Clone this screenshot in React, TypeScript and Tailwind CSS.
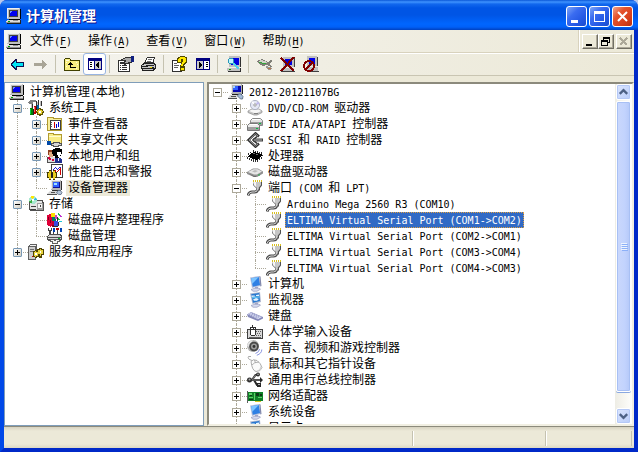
import { useState, type ReactNode } from "react";

type IconName = keyof typeof ICONS;

type Node = {
  icon: IconName;
  text: string;
  open?: boolean;
  closed?: boolean;
  children?: Node[];
};

// drawn with smooth edges, the rest stays on the pixel grid
const SMOOTH = ["dvd", "ide", "scsi", "drive", "port", "screen", "monitor", "keyboard", "sound", "mouse", "usb", "device", "deviceRoot"];

const ICONS = {
  pc: (
    <>
      <path fill="#c0c0c0" d="M1 0h13v11H1z" />
      <path fill="#f0f0f0" d="M1 0h12v1H2v9H1z" />
      <path fill="#404040" d="M3 2h9v7H3z" />
      <path fill="#0000f0" d="M4 3h7v5H4z" />
      <path fill="#7090ff" d="M4 3h2v1H4zM4 4h1v1H4z" />
      <path fill="#000" d="M14 1h1v10h-1zM3 11h11v1H3z" />
      <path fill="#dcdcdc" d="M1 12h13v2H0v-1h1z" />
      <path fill="#909090" d="M0 14h14v1H0zM7 12h5v1H7z" />
      <path fill="#202020" d="M14 12h1v3h-1zM1 15h14v1H1z" />
      <path fill="#00a000" d="M2 13h2v1H2z" />
    </>
  ),
  device: (
    <>
      <path fill="#b4b4b4" d="M4 0h10v10H4z" />
      <path fill="#efefef" d="M4 0h9v1H5v8H4z" />
      <path fill="#101090" d="M6 2h7v6H6z" />
      <path fill="#3060ff" d="M6 2h6v5H6z" />
      <path fill="#a0e0ff" d="M7 3h3v2H7z" />
      <path fill="#303030" d="M14 1h1v9h-1zM5 10h9v1H5z" />
      <path fill="#d8d8d8" d="M3 11h8l-2 3H0z" />
      <path fill="#505050" d="M0 14h10v1H0zM4 12h4v1H4z" />
      <path fill="#b4c4d8" stroke="#56657c" strokeWidth=".8" d="M11 10.5h2.500l1.500 2-1 2h-2.500l-2-1.500z" />
    </>
  ),
  deviceRoot: (
    <>
      <path fill="#b4b4b4" d="M3 0h11v10H3z" />
      <path fill="#efefef" d="M3 0h10v1H4v8H3z" />
      <path fill="#0808b0" d="M5 2h8v6H5z" />
      <path fill="#3060ff" d="M5 2h5v4H5z" />
      <path fill="#a0d0ff" d="M5 2h2v2H5z" />
      <path fill="#202020" d="M14 1h1v9h-1zM4 10h10v1H4z" />
      <path fill="#d8d8d8" d="M2 11h8l-1 3H0z" />
      <path fill="#505050" d="M0 14h9v1H0zM3 12h5v1H3z" />
      <path fill="#a4bcd8" stroke="#56657c" strokeWidth=".8" d="M10.500 10h2.500l2 2.500-.5 2.500h-2l-3-3z" />
    </>
  ),
  tools: (
    <>
      <path fill="#808080" d="M0 2l3-2h5v2H5v2H1z" />
      <path fill="#303030" d="M3 4h2v4H3zM8 1h1v6H8zM13 1h1v5h-1zM10 0h1v5h-1z" />
      <path fill="#c0c0c0" d="M3 4h1v4H3zM9 2h1v4H9zM12 1h1v5h-1z" />
      <path fill="#008000" d="M2 8h3v7H2z" />
      <path fill="#00d040" d="M2 9h1v5H2z" />
      <path fill="#c00000" d="M6 6h2v8H6z" />
      <path fill="#ff6060" d="M6 7h1v5H6z" />
      <path fill="#0060a0" d="M9 5h2v4H9z" />
      <path fill="#202020" d="M5 9h1v6H5zM8 7h1v3H8z" />
      <path fill="#605400" d="M9 9h6v6H9zM8 11h8v2H8zM11 8h2v8h-2z" />
      <path fill="#e8d030" d="M10 10h4v4h-4zM9 11h6v1H9zM11 9h1v5h-1z" />
      <path fill="#fff" d="M11 11h2v2h-2z" />
    </>
  ),
  event: (
    <>
      <path fill="#b09a30" d="M0 1h7v1h8v13H0z" />
      <path fill="#f8ee9c" d="M1 2h5v1h8v11H1z" />
      <path fill="#404040" d="M3 4h11v10H3z" />
      <path fill="#fff" d="M4 5h9v8H4z" />
      <path fill="#606060" d="M4 6h1v1H4zM4 8h1v1H4zM4 10h1v1H4z" />
      <path fill="#d00000" d="M7 6h1v6H7z" />
      <path fill="#0000d0" d="M9 8h1v4H9zM11 6h1v5h-1z" />
    </>
  ),
  share: (
    <>
      <path fill="#b09a30" d="M1 1h6v1h8v10H1z" />
      <path fill="#f8ec88" d="M2 2h4v1h8v8H2z" />
      <path fill="#fffbd0" d="M2 4h12v1H2z" />
      <path fill="#0048a8" d="M0 9h4v4H0z" />
      <path fill="#505050" d="M4 11h2v-1h7v1h2v3h-3v1H6v-1H4z" />
      <path fill="#d4d4d4" d="M5 12h2v-1h5v1h2v1h-3v1H7v-1H5z" />
    </>
  ),
  users: (
    <>
      <path fill="#505050" d="M0 9h9v6H0z" />
      <path fill="#dcdcdc" d="M1 9h7v5H1z" />
      <path fill="#e0ac80" d="M2 3h4v6H2z" />
      <path fill="#904020" d="M1 2h4v2H2v3H1z" />
      <path fill="#d00040" d="M1 9h2v1h1v2H2v-1H1zM5 11h2v2H5z" />
      <path fill="#000" d="M5 2h1V1h2V0h5v1h2v5h-1v2h-2v2H8V8H6V6H5z" />
      <path fill="#fff" d="M10 4h4v3h-1v2h-2V7h-1z" />
      <path fill="#203090" d="M8 10h6v1h1v4H8z" />
      <path fill="#f0f0f0" d="M11 10h1v3h-1z" />
    </>
  ),
  perf: (
    <>
      <path fill="#404040" d="M4 0h12v14H4z" />
      <path fill="#fff" d="M5 1h10v12H5z" />
      <path fill="#2020d0" d="M6 5h1v1H6zM7 4h1v1H7zM8 3h1v1H8zM9 4h1v1H9zM10 5h1v1h-1zM11 4h1v1h-1zM12 3h2v1h-2z" />
      <path fill="#d00000" d="M8 6h1v2H8zM10 7h1v1h-1zM11 6h1v1h-1zM12 5h1v1h-1zM13 4h1v7h-1z" />
      <path fill="#403800" d="M0 8h10v6H0zM2 6h2v10H2zM6 6h2v10H6z" />
      <path fill="#e8cc20" d="M1 9h8v4H1zM2 7h2v8H2zM6 7h2v8H6z" />
      <path fill="#202020" d="M4 9h2v4H4z" />
    </>
  ),
  storage: (
    <>
      <path fill="#505050" d="M1 6h3V4h11v2h1v9H2v-1H1z" />
      <path fill="#e6e6e6" d="M2 7h3V5h9v2h1v7H3v-1H2z" />
      <path fill="#a0a0a0" d="M9 7h6v7H9z" />
      <path fill="#f4f4f4" d="M10 8h4v4h-4z" />
      <path fill="#404040" d="M3 10h5v1H3zM3 13h5v1H3zM12 9h1v2h-1z" />
      <circle cx="5" cy="4" r="4" fill="#a8e8d0" />
      <path fill="#ffe600" d="M5 4L2 1l2-1h2z" />
      <path fill="#30b8e8" d="M5 4l3-3 1 3z" />
      <path fill="#38b040" d="M5 4L1 5l2 3z" />
      <path fill="#fff" d="M4 3h2v2H4z" />
    </>
  ),
  defrag: (
    <>
      <path fill="#e00038" d="M0 3h2V2h3v12H4v1H3v-1H1v-1H0z" />
      <path fill="#800020" d="M1 5h1v3H1zM3 8h1v3H3zM5 12h2v3H5z" />
      <path fill="#ffe000" d="M4 1h4v4H4z" />
      <path fill="#008060" d="M5 5h4v5H5z" />
      <path fill="#c00030" d="M5 9h2v4H5z" />
      <path fill="#3848e0" d="M7 9h4v5H7z" />
      <path fill="#d040c0" d="M8 3h2v4H8z" />
      <path fill="#20c050" d="M11 1h1v1h1v1h1v1h-2V3h-1zM11 6h1v1h1v1h-2z" />
      <path fill="#c030d0" d="M13 3h1v1h1v1h-2z" />
      <path fill="#20c8d8" d="M12 9h3v1h-3z" />
      <path fill="#303030" d="M10 5h1v4h-1zM11 10h1v4h-1zM7 14h4v1H7z" />
    </>
  ),
  disk: (
    <>
      <path fill="#404040" d="M1 0h1v2h2V0h1v3H4v4H2V3H1zM6 1h1v5H6zM10 1h1v5h-1z" />
      <path fill="#0040b0" d="M6 0h2v4H6zM13 0h2v4h-2z" />
      <path fill="#c00000" d="M9 0h3v2H9z" />
      <path fill="#505050" d="M0 8h1V7h1V6h12v1h1v5h-1v1H1v-1H0z" />
      <path fill="#d6d6d6" d="M1 8h1V7h11v1h1v1H1zM1 10h13v1H1z" />
      <path fill="#00b030" d="M11 10h2v1h-2z" />
      <path fill="#606060" d="M3 11h8v1h2v2h-2v2H5v-2H3z" />
      <path fill="#f4f4f4" d="M4 12h3v1h2v-1h3v1h-2v2H6v-2H4z" />
    </>
  ),
  services: (
    <>
      <path fill="#606060" d="M0 2h1V1h1V0h7v13H8v3H0z" />
      <path fill="#cdcdcd" d="M1 3h6v12H1z" />
      <path fill="#f4f4f4" d="M2 1h6v1H2z" />
      <path fill="#707070" d="M2 5h4v1H2zM2 7h4v1H2z" />
      <path fill="#d00000" d="M4 12h2v1H4z" />
      <path fill="#504400" d="M5 7h6v6H5zM7 6h2v8H7zM9 5h7v6H9zM11 4h3v10h-3z" />
      <path fill="#e8d440" d="M6 8h4v4H6zM7 7h1v6H7zM10 6h5v4h-5zM12 5h1v7h-1z" />
      <path fill="#fff" d="M7 9h2v2H7zM12 7h1v2h-1z" />
    </>
  ),
  dvd: (
    <>
      <path fill="#c4c4c4" stroke="#969696" strokeWidth=".8" d="M1 11l4-2h7l3 2v1.500l-5 2.500H7l-6-2.500z" />
      <path fill="#f6f6f6" d="M2 11l3-1.500h7l2 1.500-4 2H7z" />
      <circle cx="8" cy="5" r="4.600" fill="#e4e7f4" stroke="#a0a4b8" strokeWidth=".8" />
      <path fill="#c0b8ee" d="M8 5l3-3.500 1.500 2.500z" />
      <path fill="#fff" d="M8 5L4.500 2.500 6 1z" />
      <circle cx="8" cy="5" r="1.200" fill="#fff" stroke="#888" strokeWidth=".8" />
      <path fill="#808080" d="M7 13h4v1H7z" />
    </>
  ),
  ide: (
    <>
      <path fill="#e4e4e4" stroke="#888" d="M3.500 4.500l2-2h8l2 2v5h-12z" />
      <path fill="#9c9c9c" d="M4 6h11v3H4z" />
      <path fill="#ececec" stroke="#777" d="M.5 9.500l2-2h8l2 2v5H.5z" />
      <path fill="#a0a0a0" d="M1 11h11v3H1z" />
      <path fill="#fff" d="M5 3h8v1H5zM3 8h7v1H3z" />
      <path fill="#00c040" d="M9 12h2v1H9zM12 7h2v1h-2z" />
    </>
  ),
  scsi: (
    <>
      <path fill="none" stroke="#303030" strokeWidth="2.400" d="M12 4.500L8.500 1.300 1.500 8l7 6.700L12 11.500" />
      <path fill="none" stroke="#aaa" strokeWidth=".8" d="M11 4L8.500 1.800 2 8l6.500 6.200 2.500-2.200" />
      <path fill="none" stroke="#303030" strokeWidth="1.600" d="M10 4.500L6 8l4 3.500" />
      <path fill="#404040" d="M6 6.500h10v3H6z" />
      <path fill="#b8b8b8" d="M7 7.500h8v1H7z" />
    </>
  ),
  cpu: (
    <>
      <path fill="#000" d="M1 8h1V7h1V6h1V5h2V4h3v1h3v1h3v2h-1v1h-1v1h-1v1h-1v1H8v-1H5v-1H3V9H1z" />
      <path fill="#686868" d="M6 5h2v1H6zM9 6h2v1H9z" />
      <path
        fill="#303030"
        d="M6 2h1v2H6zM8 3h1v1H8zM10 3h1v2h-1zM12 4h1v2h-1zM14 4h1v2h-1zM3 4h1v1H3zM1 5h1v2H1zM0 9h1v2H0zM2 10h1v2H2zM4 11h1v2H4zM6 11h1v3H6zM8 12h1v2H8zM10 12h1v2h-1zM12 10h1v2h-1zM14 9h1v2h-1zM15 7h1v1h-1z"
      />
    </>
  ),
  drive: (
    <>
      <path fill="#909090" d="M0 8l6-3.500h5l5 3v2L10 13H7L0 10z" />
      <path fill="#e6e6e6" d="M.8 8l5.500-2.800h4.500L15 7.500l-5 3H7z" />
      <path fill="#bcbcbc" d="M5 7.500L8 6l3 1-3 1.500z" />
      <path fill="#6c6c6c" d="M2 9.800L7 12h2v1H7z" />
      <path fill="#20b048" d="M11 10.500h2v1h-2z" />
    </>
  ),
  port: (
    <>
      <path fill="#505050" d="M6 2h9v3.500L13 8v2.500H9V8L6 5z" />
      <path fill="#c6c6c6" d="M6 2h8v3l-2.200 2.600V10H9.500V7.600L6.800 5z" />
      <path fill="#f6f6f6" d="M6.500 2H9v5L7 5z" />
      <path fill="#d8c020" d="M6 0h1v2H6zM8 0h1v2H8zM10 0h1v2h-1zM12 0h1v2h-1zM14 0h1v2h-1z" />
      <path fill="none" stroke="#484848" strokeWidth="2.800" d="M10.500 9.500q0 2.500-3 2.500H5q-3 0-4 3.500" />
      <path fill="none" stroke="#dcdcdc" strokeWidth="1" d="M10.500 9q0 3-3 3H5q-3 0-4 3.500" />
    </>
  ),
  screen: (
    <>
      <path fill="#b8c0dc" d="M3 1.500l9-1.500 1.500 10L5 12z" />
      <path fill="#2f80e4" d="M4.200 2.200l7.600-1.200L13 9l-7.200 1.800z" />
      <path fill="#7cc4ff" d="M4.200 2.200l7.600-1.200-6.800 7z" />
      <path fill="#8088ac" d="M12.200 0l1.300.5 1 9.500-1.200.5z" />
      <path fill="#a4aacc" d="M8 11h3v2.500H8z" />
      <path fill="#d8dcf0" stroke="#949abc" strokeWidth=".7" d="M4 13.500l4-1.300h4l1.500 1-3.500 2H6z" />
    </>
  ),
  monitor: (
    <>
      <path fill="#b0b8d0" d="M3 1.500l10-1.500 1 10-8.500 2z" />
      <path fill="#2878d0" d="M4.200 2.200l8-1.200L13 9l-7 1.700z" />
      <path fill="#e4f4ff" d="M4.500 3.500h3l1 1-3.800.5zM9 3l3-.5v1.500H9zM6 7.500l3-1.500 3 1-2 1.800H7z" />
      <path fill="#60c0f0" d="M5 5l7.500-.8.2 1.300L5.200 6.500z" />
      <path fill="#a4aacc" d="M8 11h3v2.500H8z" />
      <path fill="#d8dcf0" stroke="#949abc" strokeWidth=".7" d="M4 13.500l4-1.300h4l1.500 1-3.500 2H6z" />
    </>
  ),
  keyboard: (
    <>
      <path fill="#8488b8" d="M0 6.500L4 4l12 5v1.500L11 13 1 9z" />
      <path fill="#d8dcf4" d="M.8 6.200L4 4.500 15 9l-4 2.300z" />
      <path fill="none" stroke="#8b90c0" strokeWidth=".9" strokeDasharray="1.200 .8" d="M2 6.500l9 3.700M3.500 5.800l9 3.600M5 5.400l8.500 3.300" />
    </>
  ),
  hid: (
    <>
      <path fill="#404040" d="M0 5h16v10H0z" />
      <path fill="#d8d8d8" d="M1 6h14v8H1z" />
      <path fill="#606060" d="M9 7h1v1H9zM11 7h1v1h-1zM13 7h1v1h-1zM10 9h1v1h-1zM12 9h1v1h-1zM9 11h1v1H9zM11 11h1v1h-1zM13 11h1v1h-1zM2 13h12v1H2z" />
      <path fill="#303030" d="M3 3h6v8H8v1H4v-1H3zM5 1h1v2H5z" />
      <path fill="#fff" d="M4 6h4v5H4zM4 4h2v1H4zM7 4h1v1H7z" />
    </>
  ),
  sound: (
    <>
      <circle cx="6" cy="6" r="6" fill="#b0b0b0" />
      <path fill="#e4e4e4" d="M0 6q1-5 6-6L4 3 2 7z" />
      <circle cx="7" cy="6.500" r="4.800" fill="#484848" />
      <circle cx="7" cy="6.500" r="3" fill="#9c9c9c" />
      <circle cx="7" cy="6.500" r="1.400" fill="#303030" />
      <path fill="none" stroke="#8894e0" d="M12.500 9q0 3-4 4.500M14.800 9.500q0 4-5 5.800" />
    </>
  ),
  mouse: (
    <>
      <path fill="none" stroke="#a0a0a0" strokeWidth=".9" d="M5 4.500Q0 3 1.500.5H4" />
      <path fill="#fbfbfb" stroke="#a4a4a4" strokeWidth=".9" d="M4 5.500q2-3 6-1 4 3 5 7-1 4-6 4-4-1-5-10z" />
      <path fill="none" stroke="#a8a8a8" strokeWidth=".9" d="M5 9q2-3 7-3M7.500 4l1 3" />
      <path fill="#d0d0d0" d="M14 9.500q2 5-4 6 3-2 4-6z" />
    </>
  ),
  usb: (
    <>
      <path fill="none" stroke="#282828" strokeWidth="2" d="M2 8h12M5 8l3.500-5H11M7 8l3 5h3" />
      <path fill="none" stroke="#a8a8a8" strokeWidth=".7" d="M3 8h10M5.500 7.500l3-4.500H11" />
      <circle cx="2.500" cy="8" r="2.500" fill="#303030" />
      <circle cx="2.500" cy="7.500" r="1" fill="#aaa" />
      <circle cx="11" cy="2.500" r="2" fill="#303030" />
      <circle cx="11" cy="2.300" r=".8" fill="#bbb" />
      <path fill="#282828" d="M10 11h4v4h-4zM13 5l3 3-3 3z" />
      <path fill="#b0b0b0" d="M11 12h2v1h-2z" />
    </>
  ),
  net: (
    <>
      <path fill="#606060" d="M0 3h1v12H0z" />
      <path fill="#108028" d="M1 4h15v9H1z" />
      <path fill="#60d068" d="M2 5h3v2H2zM7 5h1v7H7zM2 9h4v1H2zM11 9h4v1h-4z" />
      <path fill="#103818" d="M9 5h3v3H9zM3 7h2v1H3zM2 11h4v1H2zM13 6h2v2h-2z" />
      <path fill="#d8c820" d="M8 13h6v1H8z" />
    </>
  ),
  back: (
    <>
      <path fill="#101050" d="M1 7h1V6h1V5h1V4h1V3h2v3h7v5H7v3H5v-1H4v-1H3v-1H2v-1H1z" />
      <path fill="#00e4f4" d="M2 8h1V7h1V6h1V5h1v2h7v3H6v2H5v-1H4v-1H3V9H2z" />
    </>
  ),
  forward: <path fill="#a9a597" d="M1 7h8V4h1v1h1v1h1v1h1v1h1v1h-1v1h-1v1h-1v1h-1v1H9v-3H1z" />,
  up: (
    <>
      <path fill="#404000" d="M0 3h1V2h5v1h1v1h9v11H0z" />
      <path fill="#f8ee80" d="M1 3h5v2h9v9H1z" />
      <path fill="#fffde0" d="M2 4h3v1H2zM2 6h1v1H2zM12 6h1v1h-1zM13 8h1v1h-1zM2 10h1v1H2zM12 12h1v1h-1z" />
      <path fill="#000" d="M6 6h1v1h1v1h1v1H7v2h5v1H6V9H4V8h1V7h1z" />
    </>
  ),
  panes: (
    <>
      <path fill="#000080" d="M1 2h14v12H1z" />
      <path fill="#fff" d="M2 5h5v8H2z" />
      <path fill="#c8c8c8" d="M8 5h6v8H8z" />
      <path fill="#000" d="M3 6h2v1H3zM3 8h2v1H3zM3 10h2v1H3zM11 6h1v6h-1v-1h-1v-1H9V8h1V7h1z" />
    </>
  ),
  actions: (
    <>
      <path fill="#000080" d="M1 2h14v12H1z" />
      <path fill="#c8c8c8" d="M2 5h6v8H2z" />
      <path fill="#fff" d="M9 5h5v8H9z" />
      <path fill="#000" d="M11 6h2v1h-2zM11 8h2v1h-2zM11 10h2v1h-2zM4 6h1v1h1v1h1v2H6v1H5v1H4z" />
    </>
  ),
  props: (
    <>
      <path fill="#303030" d="M0 4h12v12H0z" />
      <path fill="#fff" d="M1 5h10v10H1z" />
      <path fill="#303030" d="M2 9h1v1H2zM4 9h5v1H4zM2 11h1v1H2zM4 11h5v1H4zM2 13h1v1H2zM4 13h5v1H4zM2 6h2v2H2z" />
      <path fill="#303030" d="M3 3h2V2h2V1h7v6h-3v1H8v1H6V8H4V6h2V5H3z" />
      <path fill="#a8a8a8" d="M5 3h2V2h6v4h-3v1H7V6h1V4H5z" />
      <path fill="#102080" d="M13 0h3v6h-3z" />
    </>
  ),
  print: (
    <>
      <path fill="#303030" d="M5 2h1V1h8v2h-1v4H3V6h1V4h1z" />
      <path fill="#fff" d="M6 2h7v1h-1v3H5V4h1z" />
      <path fill="#707070" d="M7 3h4v1H7zM6 5h4v1H6z" />
      <path fill="#202020" d="M0 9h1V8h1V7h12v1h1v5h-1v1h-1v1H1v-2H0z" />
      <path fill="#c4c4c4" d="M2 8h11v1H1v1h12v1H1v1h11v1H2v1h10v-1h1V9h1v3h-1v1z" />
      <path fill="#e8d800" d="M9 11h2v1H9z" />
    </>
  ),
  help: (
    <>
      <path fill="#303030" d="M0 4h10v12H0z" />
      <path fill="#fff" d="M1 5h8v10H1z" />
      <path fill="#606060" d="M2 7h3v1H2zM2 9h5v1H2zM2 11h4v1H2z" />
      <path fill="#504800" d="M5 2h1V1h2V0h5v1h2v6h-1v1h-1v1h-1v1h1v5H8V9h1V7H5z" />
      <path fill="#ffe800" d="M6 3h1V2h1V1h5v1h1v4h-1v1h-1v1h-1v2H9V8h1V6h1V3H9v3H6zM9 12h3v2H9z" />
    </>
  ),
  remove: (
    <>
      <path fill="#c0c0c0" d="M3 1h11v10H3zM1 12h13v3H1z" />
      <path fill="#0000e0" d="M5 3h7v6H5z" />
      <path fill="#404040" d="M14 2h1v9h-1zM1 15h14v1H1z" />
      <path fill="none" stroke="#800000" strokeWidth="2" d="M1 2l13 13M14 1L1 15" />
    </>
  ),
  disable: (
    <>
      <path fill="#c0c0c0" d="M4 0h10v10H4zM3 11h12v4H3z" />
      <path fill="#0000e8" d="M6 2h6v6H6z" />
      <path fill="#404040" d="M14 1h1v9h-1zM4 15h12v1H4z" />
      <circle cx="6" cy="10" r="5" fill="none" stroke="#800000" strokeWidth="2" />
      <path fill="none" stroke="#800000" strokeWidth="2" d="M3 13l6-6" />
    </>
  ),
  scan: (
    <>
      <path fill="#c0c0c0" d="M3 0h11v11H3zM1 12h13v3H1z" />
      <path fill="#0000e0" d="M5 2h8v7H5z" />
      <path fill="#303030" d="M14 1h1v10h-1zM2 15h13v1H2zM14 12h1v3h-1z" />
      <path fill="#00a000" d="M3 13h2v1H3z" />
      <path fill="#2898b8" d="M3 2h4v1h1v4H7v1H3V7H2V3h1z" />
      <path fill="#c0f4ff" d="M3 3h4v4H3z" />
      <path fill="#50d0e8" d="M7 7h2v1h1v1h1v1h1v1h1v2h-2v-1h-1v-1H9v-1H8V9H7z" />
    </>
  ),
  update: (
    <>
      <path fill="#808078" d="M0 5l5-2 6 3 3-2 1 1-3 3 3 2-1 1-4-2-4 1-5-3z" />
      <path fill="#d0d0c8" d="M1 5l4-1 5 2-2 2z" />
      <path fill="#30a838" d="M2 6h3v1h4v1H5V7H2z" />
      <path fill="#989898" d="M9 10l4 1 2 2-3 1-3-2z" />
      <path fill="#c07840" d="M11 12h3v1h-3z" />
    </>
  ),
};

const localTree: Node[] = [
  {
    icon: "tools",
    text: "系统工具",
    open: true,
    children: [
      { icon: "event", text: "事件查看器", closed: true },
      { icon: "share", text: "共享文件夹", closed: true },
      { icon: "users", text: "本地用户和组", closed: true },
      { icon: "perf", text: "性能日志和警报", closed: true },
      { icon: "device", text: "设备管理器" },
    ],
  },
  {
    icon: "storage",
    text: "存储",
    open: true,
    children: [
      { icon: "defrag", text: "磁盘碎片整理程序" },
      { icon: "disk", text: "磁盘管理" },
    ],
  },
  { icon: "services", text: "服务和应用程序", closed: true },
];

const deviceTree: Node[] = [
  {
    icon: "deviceRoot",
    text: "2012-20121107BG",
    open: true,
    children: [
      { icon: "dvd", text: "DVD/CD-ROM 驱动器", closed: true },
      { icon: "ide", text: "IDE ATA/ATAPI 控制器", closed: true },
      { icon: "scsi", text: "SCSI 和 RAID 控制器", closed: true },
      { icon: "cpu", text: "处理器", closed: true },
      { icon: "drive", text: "磁盘驱动器", closed: true },
      {
        icon: "port",
        text: "端口 (COM 和 LPT)",
        open: true,
        children: [
          { icon: "port", text: "Arduino Mega 2560 R3 (COM10)" },
          { icon: "port", text: "ELTIMA Virtual Serial Port (COM1->COM2)" },
          { icon: "port", text: "ELTIMA Virtual Serial Port (COM2->COM1)" },
          { icon: "port", text: "ELTIMA Virtual Serial Port (COM3->COM4)" },
          { icon: "port", text: "ELTIMA Virtual Serial Port (COM4->COM3)" },
        ],
      },
      { icon: "screen", text: "计算机", closed: true },
      { icon: "monitor", text: "监视器", closed: true },
      { icon: "keyboard", text: "键盘", closed: true },
      { icon: "hid", text: "人体学输入设备", closed: true },
      { icon: "sound", text: "声音、视频和游戏控制器", closed: true },
      { icon: "mouse", text: "鼠标和其它指针设备", closed: true },
      { icon: "usb", text: "通用串行总线控制器", closed: true },
      { icon: "net", text: "网络适配器", closed: true },
      { icon: "screen", text: "系统设备", closed: true },
      { icon: "monitor", text: "显示卡", closed: true },
    ],
  },
];

const menus = [
  ["文件", "F"],
  ["操作", "A"],
  ["查看", "V"],
  ["窗口", "W"],
  ["帮助", "H"],
];

const toolbar: { icon: IconName; label: string; active?: boolean; disabled?: boolean }[][] = [
  [
    { icon: "back", label: "后退" },
    { icon: "forward", label: "前进", disabled: true },
  ],
  [
    { icon: "up", label: "向上" },
    { icon: "panes", label: "显示/隐藏控制台树", active: true },
  ],
  [
    { icon: "props", label: "属性" },
    { icon: "print", label: "打印" },
  ],
  [
    { icon: "help", label: "帮助" },
    { icon: "actions", label: "操作窗格" },
  ],
  [{ icon: "scan", label: "扫描检测硬件改动" }],
  [
    { icon: "update", label: "更新驱动程序" },
    { icon: "remove", label: "卸载" },
    { icon: "disable", label: "停用" },
  ],
];

function Icon({ name }: { name: IconName }) {
  return (
    <svg
      viewBox="0 0 16 16"
      shapeRendering={SMOOTH.includes(name) ? "auto" : "crispEdges"}
      className="w-4 h-4 shrink-0"
      aria-hidden="true"
    >
      {ICONS[name]}
    </svg>
  );
}

// half-width characters are 6px wide, full-width ones 12px
function Label({ children }: { children: string }) {
  return (
    <>
      {children.split(/([\x20-\x7e]+)/).map((part, i) =>
        i % 2 ? (
          <span key={i} className="text-[10px]">
            {part}
          </span>
        ) : (
          part
        )
      )}
    </>
  );
}

type TreeProps = {
  nodes: Node[];
  selected: string;
  onSelect: (text: string) => void;
  selectedClass: string;
  boxClass: string;
  guides?: boolean[];
  rooted?: boolean;
};

function Tree({ nodes, guides = [], rooted = false, ...rest }: TreeProps) {
  const { selected, onSelect, selectedClass, boxClass } = rest;
  return (
    <ul>
      {nodes.map((n, i) => {
        const last = i === nodes.length - 1;
        return (
          <li key={n.text}>
            <div className="flex h-4 items-center">
              {guides.map((on, g) => (
                <span key={g} className="w-[19px] h-4 shrink-0 pl-2">
                  {on && <span className="block h-4 w-px border-l border-dotted border-[#aca899]" />}
                </span>
              ))}
              <span className="relative w-[19px] h-4 shrink-0">
                {!rooted && (
                  <span
                    className={`absolute left-2 top-0 border-l border-dotted border-[#aca899] ${last ? "h-2" : "h-4"}`}
                  />
                )}
                <span className="absolute left-2 right-0 top-2 border-t border-dotted border-[#aca899]" />
                {(n.open || n.closed) && (
                  <button
                    aria-label={n.open ? "折叠" : "展开"}
                    className={`absolute left-1 top-1 w-[9px] h-[9px] border ${boxClass}`}
                  >
                    <span className="absolute left-px top-[3px] w-[5px] h-px bg-black" />
                    {n.closed && <span className="absolute left-[3px] top-px w-px h-[5px] bg-black" />}
                  </button>
                )}
              </span>
              <Icon name={n.icon} />
              <button
                onClick={() => onSelect(n.text)}
                className={`ml-[3px] h-4 px-0.5 leading-4 whitespace-pre outline-offset-[-1px] ${
                  selected === n.text ? selectedClass : ""
                }`}
              >
                <Label>{n.text}</Label>
              </button>
            </div>
            {n.children && <Tree nodes={n.children} guides={[...guides, !rooted && !last]} {...rest} />}
          </li>
        );
      })}
    </ul>
  );
}

function CaptionButton({ label, red, children }: { label: string; red?: boolean; children: ReactNode }) {
  return (
    <button
      aria-label={label}
      className={`w-[21px] h-[21px] rounded-[3px] border border-white ${
        red
          ? "bg-[linear-gradient(135deg,#f0a48c,#e4522c_35%,#d8401c_70%,#b83010)]"
          : "bg-[linear-gradient(135deg,#7fa6f6,#3a6cf0_35%,#2458e4_70%,#1c4ccc)]"
      }`}
    >
      <svg viewBox="0 0 19 19" className="w-[19px] h-[19px]" shapeRendering="crispEdges">
        {children}
      </svg>
    </button>
  );
}

function ChildButton({ label, children }: { label: string; children: ReactNode }) {
  return (
    <button
      aria-label={label}
      className="w-4 h-[15px] bg-[#ece9d8] border border-t-white border-l-white border-r-[#716f64] border-b-[#716f64] shadow-[inset_-1px_-1px_#aca899]"
    >
      <svg viewBox="0 0 14 13" className="w-[14px] h-[13px]" shapeRendering="crispEdges">
        {children}
      </svg>
    </button>
  );
}

function ScrollButton({ label, d }: { label: string; d: string }) {
  return (
    <button
      aria-label={label}
      className="block w-full h-4 shrink-0 rounded-[2px] border border-white bg-[linear-gradient(135deg,#dce6fe,#b8ccfa)] shadow-[inset_0_0_0_1px_#b4c8f6]"
    >
      <svg viewBox="0 0 14 14" className="w-[13px] h-[14px]">
        <path d={d} fill="none" stroke="#4d6185" strokeWidth="2.500" />
      </svg>
    </button>
  );
}

export default function App() {
  const [page, setPage] = useState("设备管理器");
  const [device, setDevice] = useState("ELTIMA Virtual Serial Port (COM1->COM2)");

  return (
    <div className="h-screen w-full bg-[#b9c9ec] overflow-hidden select-none text-[12px] text-black font-['DejaVu_Sans_Mono','Noto_Sans_CJK_SC',monospace]">
      <div className="h-full flex flex-col rounded-t-[7px] overflow-hidden bg-[#0831d9]">
        <header className="h-[30px] shrink-0 flex items-center gap-1 pl-[6px] pr-[5px] pt-[2px] bg-[linear-gradient(180deg,#0a58d8_0px,#3f93ff_2px,#1268ee_4px,#0055e5_8px,#0055e5_15px,#0066ff_24px,#0060f8_27px,#0041c0_30px)]">
          <Icon name="pc" />
          <h1 className="text-[14px] leading-5 font-bold text-white [text-shadow:1px_1px_#0f1089]">计算机管理</h1>
          <div className="ml-auto flex gap-[2px]">
            <CaptionButton label="最小化">
              <path fill="#fff" d="M4 13h7v3H4z" />
            </CaptionButton>
            <CaptionButton label="最大化">
              <path fill="#fff" fillRule="evenodd" d="M4 4h11v11H4zM5 7v7h9V7z" />
            </CaptionButton>
            <CaptionButton label="关闭" red>
              <path fill="none" stroke="#fff" strokeWidth="2" shapeRendering="auto" d="M5 5l9 9M14 5l-9 9" />
            </CaptionButton>
          </div>
        </header>

        <div className="flex-1 min-h-0 flex border-x-4 border-b-4 border-l-[#0048e8] border-r-[#0029c8] border-b-[#0029c8] bg-[#ece9d8]">
          <div className="flex-1 min-w-0 flex flex-col">
            <nav className="h-[23px] shrink-0 flex border-b border-[#d8d2bd] bg-[linear-gradient(90deg,#f6f5f1,#ece9d8)]">
              <div className="flex-1 flex items-center pl-0.5">
                <Icon name="pc" />
                {menus.map(([name, key]) => (
                  <button key={key} className="px-2 h-5 leading-5 whitespace-nowrap">
                    {name}
                    <span className="text-[10px]">
                      (<u className="underline-offset-2">{key}</u>)
                    </span>
                  </button>
                ))}
              </div>
              <div className="flex items-center border-l border-[#d8d2bd] pl-[3px] pr-[2px] shadow-[inset_1px_0_#fff]">
                <ChildButton label="最小化子窗口">
                  <path fill="#000" d="M3 9h6v2H3z" />
                </ChildButton>
                <ChildButton label="还原子窗口">
                  <path fill="#000" fillRule="evenodd" d="M4 2h7v6H9v3H2V5h2zM5 4v1h4v2h1V4zM3 7v3h5V7z" />
                </ChildButton>
                <span className="w-0.5" />
                <ChildButton label="关闭子窗口">
                  <path fill="none" stroke="#aca899" strokeWidth="2" d="M3 3l7 7M10 3l-7 7" />
                </ChildButton>
              </div>
            </nav>

            <div className="h-[23px] shrink-0 flex items-center pl-0.5 border-b border-[#c9c5b2] shadow-[inset_0_1px_#fff] bg-[linear-gradient(90deg,#f4f3ee,#ece9d8)]">
              {toolbar.map((group, g) => (
                <div key={g} className="flex items-center">
                  {g > 0 && <span className="w-px h-[18px] ml-[3px] mr-1 bg-[#c5c2b0]" />}
                  {group.map((b) => (
                    <button
                      key={b.icon}
                      aria-label={b.label}
                      disabled={b.disabled}
                      className={`w-[23px] h-[22px] flex items-center justify-center ${
                        b.active ? "bg-white border border-[#98b5e2] rounded-[3px]" : ""
                      }`}
                    >
                      <Icon name={b.icon} />
                    </button>
                  ))}
                </div>
              ))}
            </div>

            <main className="flex-1 min-h-0 flex gap-[3px] pt-[6px]">
              <section className="w-[200px] shrink-0 overflow-hidden bg-white border border-[#7f9db9] pl-1 pt-px">
                <div className="flex h-4 items-center">
                  <Icon name="pc" />
                  <button onClick={() => setPage("")} className="ml-[3px] h-4 px-0.5 leading-4 whitespace-nowrap">
                    <Label>计算机管理(本地)</Label>
                  </button>
                </div>
                <Tree
                  nodes={localTree}
                  selected={page}
                  onSelect={setPage}
                  selectedClass="bg-[#ece9d8]"
                  boxClass="border-[#7898b5] rounded-[1px] bg-[linear-gradient(135deg,#fff,#d2cdc0)]"
                />
              </section>

              <section className="flex-1 min-w-0 flex bg-white border-2 border-t-[#8c8a7c] border-l-[#8c8a7c] border-r-[#f1efe2] border-b-[#f1efe2]">
                <div className="flex-1 min-w-0 overflow-hidden">
                  <Tree
                    nodes={deviceTree}
                    rooted
                    selected={device}
                    onSelect={setDevice}
                    selectedClass="bg-[#316ac5] text-white outline-1 outline-dotted outline-[#e0a040]"
                    boxClass="border-[#aca899] bg-white"
                  />
                </div>
                <div className="w-[17px] shrink-0 flex flex-col bg-[linear-gradient(90deg,#eeede5,#fefefb)] px-px">
                  <ScrollButton label="向上滚动" d="M3 9l4-4 4 4" />
                  <div className="flex-1 min-h-0 pb-4 pt-px">
                    <div className="h-full rounded-[2px] border border-white shadow-[inset_0_0_0_1px_#a8c0f4,0_1px_#8aa8e0] bg-[linear-gradient(90deg,#cad8fc,#c2d3fd_60%,#b4c8f8)] flex flex-col items-center justify-center gap-px">
                      {[0, 1, 2, 3].map((i) => (
                        <span key={i} className="w-[6px] h-px bg-[#eef4fe] shadow-[1px_1px_#8cb0f8]" />
                      ))}
                    </div>
                  </div>
                  <ScrollButton label="向下滚动" d="M3 5l4 4 4-4" />
                </div>
              </section>
            </main>

            <footer className="h-[22px] shrink-0 flex border-t border-[#8c8a7c] pt-1 pb-0.5 pr-[2px] bg-[linear-gradient(180deg,#d6d2c0,#ece9d8_4px,#ece9d8_17px,#dcd8c4)]">
              <span className="flex-1 border-r border-[#c5c2b0]" />
              <span className="w-[133px] border-l border-white border-r border-r-[#c5c2b0]" />
              <span className="w-[86px] border-l border-white border-r border-r-[#c5c2b0]" />
            </footer>
          </div>
        </div>
      </div>
    </div>
  );
}
